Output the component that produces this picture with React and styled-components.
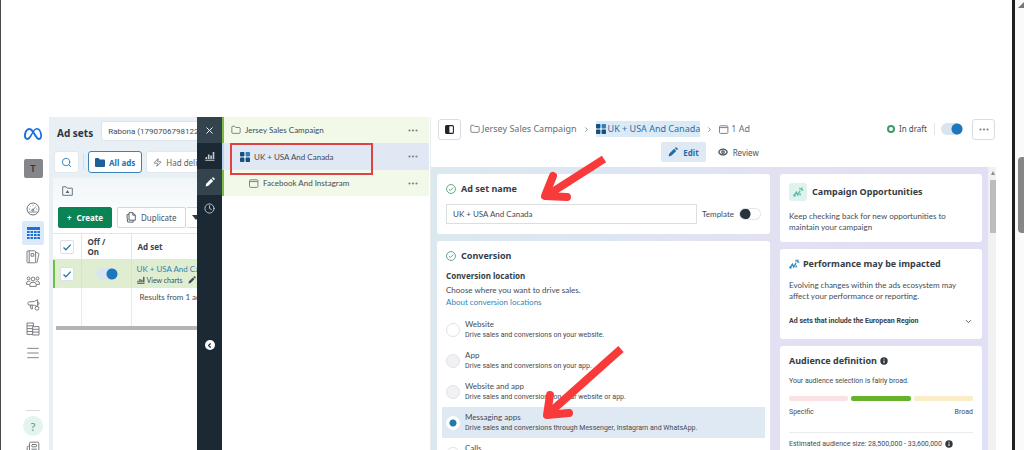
import React from "react";
import styled, { createGlobalStyle, css } from "styled-components";
import {
    Search, Zap, Menu, X, Clock, Folder, ChevronRight,
    ChevronDown, ChevronLeft, Eye, Newspaper
} from "lucide-react";
import { FaMeta } from "react-icons/fa6";

const GlobalStyle = createGlobalStyle`
    * {
        box-sizing: border-box;
    }
    body {
        margin: 0;
        background: #fff;
        color: #434c55;
        font-family: Lato, "Open Sans", sans-serif;
        font-size: 8px;
        line-height: 12px;
    }
    button, input, select {
        font-family: inherit;
        color: inherit;
        margin: 0;
    }
    h1, h2, h3, p {
        margin: 0;
    }
    h1, h2, h3, th {
        font-family: "Noto Sans", "Open Sans", sans-serif;
    }
    a {
        text-decoration: none;
    }
    svg {
        flex: none;
        display: block;
    }
`;

const Page = styled.div`
    display: flex;
    height: 100vh;
    overflow: hidden;
`, Document = styled.div`
    flex: 1;
    min-width: 0;
    display: flex;
    padding: 117px 16px 0;
    border-left: 1px solid #4a4a4a;
    border-right: 3px solid #1f1f1f;
`, PageScroll = styled.div`
    flex: none;
    width: 9px;
    display: flex;
    flex-direction: column;
    background: #fafafa;
    overflow: hidden;
`, PageScrollArrow = styled.div`
    width: 12px;
    height: 6px;
    margin: 2px 0 149px 3px;
    background: #777;
    clip-path: polygon(50% 0, 100% 100%, 0 100%);
`, PageScrollThumb = styled.div`
    width: 12px;
    height: 76px;
    margin-left: 3px;
    border-radius: 4px;
    background: #868686;
`;

/* left navigation */
const Nav = styled.nav`
    flex: none;
    width: 32px;
    display: flex;
    flex-direction: column;
    align-items: center;
    color: #6d7277;
    > * {
        flex: none;
    }
`, NavLogo = styled.div`
    padding: 8px 0;
    color: #1f6fe0;
`, Avatar = styled.button`
    width: 19px;
    height: 19px;
    margin: 8px 0 19px;
    padding: 0;
    border: 0;
    border-radius: 2px;
    background: #85868b;
    color: #33363a;
    font-size: 9px;
    font-weight: 700;
`, NavItem = styled.button`
    display: flex;
    align-items: center;
    justify-content: center;
    width: 22px;
    height: 24px;
    padding: 0;
    border: 0;
    border-radius: 2px;
    background: ${p => p.$active ? '#dce9f8' : 'none'};
    color: ${p => p.$active ? '#1f6fd6' : 'inherit'};
`, NavRule = styled.hr`
    width: 14px;
    margin: 45px 0 5px;
    border: 0;
    border-top: 1px solid #d8dadc;
`, Help = styled.button`
    width: 20px;
    height: 20px;
    padding: 0;
    border: 0;
    border-radius: 50%;
    background: #e3f3ee;
    color: #5a9c8c;
    font-size: 12px;
`;

/* ad sets list */
const AdsPane = styled.section`
    flex: none;
    width: 148px;
    overflow: hidden;
    background: #e8f0f6;
`, AdsHeader = styled.div`
    display: flex;
    align-items: center;
    gap: 8px;
    width: 260px;
    padding: 4px 0 10px 8px;
`, AdsTitle = styled.h1`
    padding-top: 4px;
    font-size: 10px;
    line-height: 16px;
    color: #2b3440;
`, AccountSelect = styled.select`
    width: 150px;
    height: 20px;
    padding: 0 6px;
    border: 1px solid #dde3e8;
    border-radius: 3px;
    background: #fff;
    appearance: none;
    font-family: Roboto, sans-serif;
    font-size: 8px;
`, Filters = styled.div`
    display: flex;
    align-items: center;
    gap: 4px;
    width: 260px;
    padding: 0 0 5px 5px;
`, FilterButton = styled.button`
    display: flex;
    align-items: center;
    gap: 4px;
    height: 22px;
    padding: 0 6px;
    border: 1px solid ${p => p.$active ? '#3d82b5' : '#e3e8ec'};
    border-radius: 3px;
    background: #fff;
    color: ${p => p.$active ? '#2272b0' : '#5b6269'};
    font-family: "Noto Sans", sans-serif;
    font-size: 8px;
    font-weight: ${p => p.$active ? 700 : 400};
    white-space: nowrap;
`, FilterRule = styled.span`
    width: 1px;
    height: 16px;
    background: #d5dde3;
`, AdsBody = styled.div`
    height: 100%;
    margin-left: 4px;
    background: linear-gradient(#f1f6f9, #fff 50px);
`, BodyTools = styled.div`
    padding: 8px 9px 11px;
`, Actions = styled.div`
    display: flex;
    gap: 5px;
    width: 260px;
    padding: 0 0 5px 5px;
`, ActionButton = styled.button`
    display: flex;
    align-items: center;
    gap: 5px;
    height: 21px;
    padding: 0 8px;
    border: 1px solid ${p => p.$primary ? '#0b8455' : '#d3d8dc'};
    border-radius: 2px;
    background: ${p => p.$primary ? '#0b8455' : '#fff'};
    color: ${p => p.$primary ? '#fff' : '#4b5259'};
    font-family: "Noto Sans", sans-serif;
    font-size: 8px;
    font-weight: ${p => p.$primary ? 700 : 400};
`, SplitButton = styled.div`
    display: flex;
    ${ActionButton} + ${ActionButton} {
        padding: 0 6px;
        border-left: 0;
    }
`, Table = styled.table`
    width: 260px;
    table-layout: fixed;
    border-collapse: collapse;
    text-align: left;
`, Th = styled.th`
    width: ${p => p.$width || 'auto'};
    height: 26px;
    padding: 0 6px;
    border: 1px solid #e2e6e9;
    border-left-width: 0;
    color: #3b434b;
    font-size: 8px;
    font-weight: 700;
    line-height: 10px;
`, Td = styled.td`
    height: 28px;
    padding: 0 5px;
    border-right: 1px solid ${p => p.$selected ? '#d5e6c4' : '#e8ebed'};
    background: ${p => p.$selected ? '#dfeed0' : 'none'};
    white-space: nowrap;
    vertical-align: ${p => p.$top ? 'top' : 'middle'};
    &:first-child {
        box-shadow: ${p => p.$selected ? 'inset 2px 0 #6cc03c' : 'none'};
    }
    input[role="switch"] {
        margin: 0 8px 0 auto;
    }
`, AdLink = styled.a`
    display: block;
    color: #3a7fb0;
`, AdTools = styled.div`
    display: flex;
    align-items: center;
    gap: 2px;
    font-size: 7px;
    line-height: 10px;
`, Results = styled.p`
    padding: 3px 3px 23px;
`, TableScroll = styled.div`
    width: 260px;
    height: 4px;
    margin: 0 3px;
    background: #b4b4b4;
`, Checkbox = styled.input`
    display: block;
    width: 14px;
    height: 14px;
    margin: 0 auto;
    border: 1px solid #dbe1e6;
    border-radius: 2px;
    appearance: none;
    background: #fff url("data:image/svg+xml,%3Csvg xmlns='http://www.w3.org/2000/svg' viewBox='0 0 12 12'%3E%3Cpath d='M2.5 6.5l2.4 2.3L9.7 3.6' fill='none' stroke='%232c76ad' stroke-width='1.3'/%3E%3C/svg%3E") center / 12px 12px no-repeat;
`, Toggle = styled.input`
    flex: none;
    display: block;
    width: 22px;
    height: 12px;
    border-radius: 6px;
    appearance: none;
    background: radial-gradient(circle at 6px 6px, #27323c 5px, #fff 6px);
    box-shadow: inset 0 0 0 1px #e3e7ea;
    &:checked {
        background: radial-gradient(circle at 16px 6px, #1b78bd 5px, #d9e4ee 6px);
        box-shadow: none;
    }
`;

/* dark rail */
const Rail = styled.nav`
    flex: none;
    width: 25px;
    display: flex;
    flex-direction: column;
    align-items: center;
    background: #1b2935;
    color: #c2cad0;
`, RailItem = styled.button`
    display: flex;
    align-items: center;
    justify-content: center;
    width: 25px;
    height: 26px;
    padding: 0;
    border: 0;
    background: ${p => p.$active ? '#33444f' : 'none'};
    color: ${p => p.$active ? '#fff' : 'inherit'};
`, RailCollapse = styled.button`
    display: flex;
    align-items: center;
    justify-content: center;
    width: 10px;
    height: 10px;
    margin-top: 119px;
    padding: 0;
    border: 0;
    border-radius: 50%;
    background: #fff;
    color: #1b2935;
`;

/* campaign tree */
const Tree = styled.aside`
    flex: none;
    width: 209px;
    padding-right: 1px;
    border-right: 1px solid #e9edf0;
`, TreeRow = styled.div`
    position: relative;
    display: flex;
    align-items: center;
    gap: 4px;
    height: ${p => p.$selected ? 27 : 26}px;
    padding: 0 11px 0 ${p => 7 + p.$level * 9}px;
    border-left: 2px solid ${p => p.$selected ? '#b9d4ef' : '#7dbb45'};
    background: ${p => p.$selected ? '#e0e8f3' : '#f3f9e9'};
`, TreeLabel = styled.span`
    flex: 1;
`, DotsButton = styled.button`
    display: flex;
    align-items: center;
    justify-content: center;
    padding: 0;
    border: 0;
    background: none;
    ${p => p.$boxed && css`
        width: 23px;
        height: 21px;
        margin-left: 3px;
        border: 1px solid #d9dde2;
        border-radius: 3px;
        background: #fff;
    `}
`, Highlight = styled.div`
    position: absolute;
    top: 0;
    left: 6px;
    width: 143px;
    height: 32px;
    border: 2px solid #dd4247;
    z-index: 1;
`;

/* editor */
const Editor = styled.main`
    position: relative;
    flex: 1;
    min-width: 0;
    display: flex;
    flex-direction: column;
`, EditorHeader = styled.header`
    height: 50px;
    padding-top: 1px;
`, Crumbs = styled.div`
    display: flex;
    align-items: center;
    gap: 6px;
    padding: 0 1px 0 7px;
    height: 22px;
    font-family: "Noto Sans", sans-serif;
    font-size: 9px;
`, PanelButton = styled.button`
    display: flex;
    align-items: center;
    justify-content: center;
    width: 23px;
    height: 21px;
    margin-right: 3px;
    padding: 0;
    border: 1px solid #d9dde2;
    border-radius: 3px;
    background: #fff;
`, Crumb = styled.a`
    display: flex;
    align-items: center;
    gap: 2px;
    height: 16px;
    color: ${p => p.$active ? '#2c6f9f' : '#666e76'};
    background: ${p => p.$active ? '#dbeaf7' : 'none'};
    white-space: nowrap;
`, Status = styled.div`
    display: flex;
    align-items: center;
    gap: 4px;
    margin-left: auto;
    padding-right: 7px;
    border-right: 1px solid #e2e6ea;
    font-size: 8px;
`, StatusDot = styled.span`
    width: 8px;
    height: 8px;
    border: 2px solid #3c9c6c;
    border-radius: 50%;
`, Tabs = styled.div`
    display: flex;
    justify-content: center;
    gap: 5px;
    padding-top: 2px;
`, Tab = styled.button`
    display: flex;
    align-items: center;
    gap: 5px;
    height: 20px;
    padding: 0 7px;
    border: 0;
    border-radius: 2px;
    background: ${p => p.$active ? '#dfe9f4' : 'none'};
    color: ${p => p.$active ? '#1f6ca8' : '#4b545c'};
    font-family: "Noto Sans", sans-serif;
    font-size: 8px;
    font-weight: ${p => p.$active ? 700 : 400};
`, EditorBody = styled.div`
    flex: 1;
    min-height: 0;
    display: flex;
    background: linear-gradient(100deg, #dbe9ef, #dfe4f3 40%, #e4def2 75%, #dfe0f6);
`, Columns = styled.div`
    flex: 1;
    min-width: 0;
    display: grid;
    grid-template-columns: minmax(0, 1fr) 202px;
    gap: 10px;
    padding: 7px 6px 0;
    overflow: hidden;
`, Column = styled.div`
    display: flex;
    flex-direction: column;
    gap: 7px;
`, BodyScroll = styled.div`
    flex: none;
    width: 8px;
    display: flex;
    flex-direction: column;
    align-items: flex-end;
    background: #f1f1f3;
`, BodyScrollArrow = styled.div`
    width: 4px;
    height: 4px;
    margin: 4px 1px 5px;
    background: #8c8c8c;
    clip-path: polygon(50% 0, 100% 100%, 0 100%);
`, BodyScrollThumb = styled.div`
    width: 6px;
    height: 53px;
    background: #bcbcbe;
`, Card = styled.section`
    padding: 9px;
    border-radius: 3px;
    background: #fff;
`, CardTitle = styled.h2`
    display: flex;
    align-items: center;
    gap: ${p => p.$tight ? 3 : 5}px;
    font-size: 9px;
    line-height: 12px;
    color: #343d46;
`, NameRow = styled.div`
    display: flex;
    align-items: center;
    gap: 5px;
    padding: 9px 0 1px;
`, NameInput = styled.input`
    flex: 1;
    min-width: 0;
    height: 20px;
    padding: 0 6px;
    border: 1px solid #dcdfe2;
    font-size: 8px;
`, TemplateLabel = styled.label`
    display: flex;
    align-items: center;
    gap: 5px;
`, Subtitle = styled.h3`
    margin: 8px 0 2px;
    font-size: 8px;
    line-height: 12px;
    color: #343d46;
`, Note = styled.p`
    line-height: 12px;
`, HelpLink = styled.a`
    display: block;
    margin-bottom: 6px;
    color: #2f86b8;
`, Option = styled.label`
    display: flex;
    align-items: center;
    gap: 5px;
    height: 31px;
    margin: 0 -4px;
    padding: 0 4px;
    background: ${p => p.$selected ? '#dfe9f3' : 'none'};
`, Radio = styled.input`
    flex: none;
    width: 14px;
    height: 14px;
    border: 1px solid #e0e2e6;
    border-radius: 50%;
    appearance: none;
    background: #fff;
    &:disabled {
        background: #f1f1f5;
    }
    &:checked {
        border-color: #fff;
        background: radial-gradient(circle, #2277ab 3px, #fff 4px);
    }
`, OptionName = styled.span`
    display: block;
    line-height: 11px;
`, OptionText = styled.span`
    display: block;
    font-family: Roboto, sans-serif;
    font-size: 7px;
    line-height: 11px;
`, IconTile = styled.span`
    display: flex;
    align-items: center;
    justify-content: center;
    width: 18px;
    height: 18px;
    border-radius: 3px;
    background: #dff3ee;
    color: #5cb9a5;
`, SideText = styled.p`
    padding-top: 10px;
    line-height: 11px;
`, Disclosure = styled.button`
    display: flex;
    align-items: center;
    justify-content: space-between;
    width: 100%;
    height: 12px;
    margin: 13px 0 3px;
    padding: 0;
    border: 0;
    background: none;
    color: #343d46;
    font-family: Roboto, sans-serif;
    font-size: 7px;
    font-weight: 700;
`, Meter = styled.div`
    display: grid;
    grid-template-columns: repeat(3, 1fr);
    gap: 3px;
    margin: 9px 0 5px;
`, MeterPart = styled.span`
    height: 5px;
    border-radius: 2px;
    background: ${p => p.$color};
`, MeterLabels = styled.div`
    display: flex;
    justify-content: space-between;
    padding-bottom: 14px;
    border-bottom: 1px solid #e9ebee;
    font-family: Roboto, sans-serif;
    font-size: 7px;
`, Audience = styled.p`
    display: flex;
    align-items: center;
    gap: 3px;
    padding-top: ${p => p.$pad};
    font-family: Roboto, sans-serif;
    font-size: 7px;
    line-height: 12px;
    white-space: nowrap;
`, Arrows = styled.svg`
    position: absolute;
    top: 0;
    left: 0;
    overflow: visible;
    pointer-events: none;
`;

const Dots = () => (
    <svg width="10" height="3" viewBox="0 0 10 3" fill="#7b838a">
        <circle cx="1.5" cy="1.5" r="1.1" />
        <circle cx="5" cy="1.5" r="1.1" />
        <circle cx="8.5" cy="1.5" r="1.1" />
    </svg>
);

const Grid4 = () => (
    <svg width="10" height="10" viewBox="0 0 10 10">
        <rect width="4.4" height="4.4" rx=".8" fill="#174f7c" />
        <rect x="5.6" width="4.4" height="4.4" rx=".8" fill="#2f7fc0" />
        <rect y="5.6" width="4.4" height="4.4" rx=".8" fill="#174f7c" />
        <rect x="5.6" y="5.6" width="4.4" height="4.4" rx=".8" fill="#174f7c" />
    </svg>
);

const AdIcon = () => (
    <svg width="10" height="9" viewBox="0 0 10 9" fill="none" stroke="#7d848a">
        <rect x=".5" y=".8" width="8.4" height="7.6" rx="1" />
        <path d="M.5 2.6h8.4" />
    </svg>
);

const Pen = ({ size = 10 }) => (
    <svg width={size} height={size} viewBox="0 0 10 10" fill="currentColor">
        <path d="M.6 9.4l.6-2.7 4.9-4.9 2.1 2.1-4.9 4.9zM6.8 1.1l.7-.7q.5-.4 1 0l1.1 1.1q.4.5 0 1l-.7.7z" />
    </svg>
);

const Bars = ({ size = 10 }) => (
    <svg width={size} height={size} viewBox="0 0 10 10" fill="currentColor">
        <path d="M.5 6h1.6v2H.5zM2.9 3.6h1.6V8H2.9zM5.3 4.6h1.6V8H5.3zM7.7 1h1.6v7H7.7zM.3 8.8h9.2v.9H.3z" />
    </svg>
);

const Gauge = () => (
    <svg width="14" height="14" viewBox="0 0 14 14" fill="none" stroke="currentColor">
        <circle cx="7" cy="7" r="6" />
        <path d="M2.4 10h9.2M7 8l2.8-3.4M3 7h1M10.2 7h1M7 2.8v1M4 4.2l.6.6" strokeWidth=".8" />
        <circle cx="6.8" cy="8.2" r="1" />
    </svg>
);

const TableIcon = () => (
    <svg width="13" height="12" viewBox="0 0 13 12" fill="currentColor">
        <path d="M0 0h13v3H0zM0 4h2.6v2H0zM3.5 4h2.6v2H3.5zM7 4h2.6v2H7zM10.4 4H13v2h-2.6zM0 7h2.6v2H0zM3.5 7h2.6v2H3.5zM7 7h2.6v2H7zM10.4 7H13v2h-2.6zM0 10h2.6v2H0zM3.5 10h2.6v2H3.5zM7 10h2.6v2H7zM10.4 10H13v2h-2.6z" />
    </svg>
);

const Pages = () => (
    <svg width="14" height="14" viewBox="0 0 14 14" fill="none" stroke="currentColor" strokeWidth=".9">
        <rect x="1" y=".8" width="8.6" height="12" rx="1" />
        <path d="M3.2 1v11.6M5 3.6h2.8v2.6H5zM9.8 2.4l2.6.8q.7.3.5 1l-1.8 8q-.2.7-1.5.5" />
    </svg>
);

const People = () => (
    <svg width="14" height="11" viewBox="0 0 14 11" fill="none" stroke="currentColor" strokeWidth=".9">
        <circle cx="7" cy="3" r="1.9" />
        <circle cx="2.5" cy="2.4" r="1.4" />
        <circle cx="11.5" cy="2.4" r="1.4" />
        <path d="M3.8 10.4V8.6q0-2.4 3.2-2.4t3.2 2.4v1.8zM3.6 8.4H.6V7q0-1.8 2-1.9 1 0 1.7.5M10.4 8.4h3V7q0-1.8-2-1.9-1 0-1.7.5" />
    </svg>
);

const Horn = () => (
    <svg width="13" height="12" viewBox="0 0 13 12" fill="none" stroke="currentColor" strokeWidth=".9">
        <path d="M10.6.8v6.8Q7.4 5.8 4 6H2.2Q.8 5.8.8 4.4T2.2 2.8H4Q7.6 3 10.6.8zM3 6l1 3.8h1.6L5 6M10.6 3.2q1.5.1 1.5 1.2t-1.5 1.2" />
        <circle cx="10" cy="9.3" r="1.9" />
    </svg>
);

const Ledgers = () => (
    <svg width="14" height="14" viewBox="0 0 14 14" fill="none" stroke="currentColor" strokeWidth=".9">
        <path d="M6.6 12.4H1V1h6.4v3M1 3.8h6M1 6.6h5.6M1 9.5h5.6M6.6 4.6H13v8.4H6.6zM6.6 7.3H13M6.6 10.1H13" />
    </svg>
);

const CopyIcon = () => (
    <svg width="10" height="11" viewBox="0 0 10 11" fill="none" stroke="currentColor" strokeWidth=".9">
        <path d="M3 .7h4l2.3 2.4v5.1H3zM6.8.8v2.4h2.4M3 2.2L.9 2.8 1.6 10l5.6.2V8.4" />
    </svg>
);

const FolderUp = () => (
    <svg width="11" height="10" viewBox="0 0 11 10" fill="none" stroke="#5d656d" strokeWidth=".9">
        <path d="M.7 9.3V.8h3.4l1.2 1.4h5v7.1z" />
        <path d="M5.5 4l1.9 2.9H3.6z" fill="#5d656d" stroke="none" />
    </svg>
);

const SolidFolder = () => (
    <svg width="10" height="9" viewBox="0 0 10 9" fill="#1d5f99">
        <path d="M0 1q0-1 1-1h2.6l1.2 1.4H9q1 0 1 1V8q0 1-1 1H1Q0 9 0 8z" />
    </svg>
);

const Check = () => (
    <svg width="10" height="10" viewBox="0 0 9 9" fill="none" stroke="#4d9f78" strokeWidth=".8">
        <circle cx="4.5" cy="4.5" r="4" />
        <path d="M2.6 4.6l1.4 1.3 2.5-2.7" />
    </svg>
);

const Spark = ({ color = 'currentColor' }) => (
    <svg width="11" height="10" viewBox="0 0 11 10" fill="none" stroke={color} strokeWidth="1.3" strokeLinecap="round">
        <path d="M1.2 8.4L3.4 5l1.3 3 2.2-3.8" />
        <path d="M7 1.2v1M8.8 3h1M7.2 7l-.2 1M9 1l-.6 1" />
        <circle cx="1.5" cy="8.4" r=".6" fill={color} />
    </svg>
);

const InfoDot = () => (
    <svg width="8" height="8" viewBox="0 0 8 8">
        <circle cx="4" cy="4" r="3.7" fill="#30373e" />
        <path d="M4 3.5v2.6M4 1.7v1" stroke="#fff" strokeWidth="1" />
    </svg>
);

const PanelIcon = () => (
    <svg width="9" height="9" viewBox="0 0 9 9">
        <rect x=".6" y=".6" width="7.8" height="7.8" rx="1" fill="#fff" stroke="#1d242b" strokeWidth="1.1" />
        <path d="M1 1h3.4v7H1z" fill="#1d242b" />
    </svg>
);

const options = [
    { name: 'Website', text: 'Drive sales and conversions on your website.' },
    { name: 'App', text: 'Drive sales and conversions on your app.', disabled: true },
    { name: 'Website and app', text: 'Drive sales and conversions on your website or app.', disabled: true },
    { name: 'Messaging apps', text: 'Drive sales and conversions through Messenger, Instagram and WhatsApp.', selected: true },
    { name: 'Calls', text: 'Drive sales and conversions through phone calls.' }
];

const Navigation = () => (
    <Nav>
        <NavLogo><FaMeta size={18} /></NavLogo>
        <Avatar>T</Avatar>
        <NavItem aria-label="Overview"><Gauge /></NavItem>
        <NavItem aria-label="Campaigns" $active><TableIcon /></NavItem>
        <NavItem aria-label="Reports"><Pages /></NavItem>
        <NavItem aria-label="Audiences"><People /></NavItem>
        <NavItem aria-label="Advertising"><Horn /></NavItem>
        <NavItem aria-label="Billing"><Ledgers /></NavItem>
        <NavItem aria-label="All tools"><Menu size={16} strokeWidth={1.3} /></NavItem>
        <NavRule />
        <Help>?</Help>
        <NavItem aria-label="News"><Newspaper size={14} strokeWidth={1.6} /></NavItem>
    </Nav>
);

const AdSets = () => (
    <AdsPane>
        <AdsHeader>
            <AdsTitle>Ad sets</AdsTitle>
            <AccountSelect aria-label="Account">
                <option>Rabona (179070679812234)</option>
            </AccountSelect>
        </AdsHeader>
        <Filters>
            <FilterButton aria-label="Search"><Search size={11} color="#2d7db8" /></FilterButton>
            <FilterRule />
            <FilterButton $active><SolidFolder />All ads</FilterButton>
            <FilterButton><Zap size={9} />Had delivery</FilterButton>
        </Filters>
        <AdsBody>
            <BodyTools><FolderUp /></BodyTools>
            <Actions>
                <ActionButton $primary><span>+</span>Create</ActionButton>
                <SplitButton>
                    <ActionButton><CopyIcon />Duplicate</ActionButton>
                    <ActionButton aria-label="More duplicate options">
                        <svg width="8" height="5" viewBox="0 0 8 5" fill="#30373e"><path d="M0 0h8L4 5z" /></svg>
                    </ActionButton>
                </SplitButton>
            </Actions>
            <Table>
                <thead>
                    <tr>
                        <Th $width="28px"><Checkbox type="checkbox" defaultChecked aria-label="Select all" /></Th>
                        <Th $width="50px">Off /<br />On</Th>
                        <Th>Ad set</Th>
                    </tr>
                </thead>
                <tbody>
                    <tr>
                        <Td $selected><Checkbox type="checkbox" defaultChecked aria-label="Select ad set" /></Td>
                        <Td $selected><Toggle type="checkbox" role="switch" defaultChecked aria-label="Ad set on" /></Td>
                        <Td $selected>
                            <AdLink href="#adset">UK + USA And Canada</AdLink>
                            <AdTools><Bars size={8} />View charts &nbsp;<Pen size={8} />Edit</AdTools>
                        </Td>
                    </tr>
                    <tr>
                        <Td />
                        <Td />
                        <Td $top><Results>Results from 1 ad set</Results></Td>
                    </tr>
                </tbody>
            </Table>
            <TableScroll />
        </AdsBody>
    </AdsPane>
);

const CampaignTree = () => (
    <Tree>
        <TreeRow $level={0}>
            <Folder size={10} color="#6a7178" />
            <TreeLabel>Jersey Sales Campaign</TreeLabel>
            <DotsButton aria-label="Campaign menu"><Dots /></DotsButton>
        </TreeRow>
        <TreeRow $level={1} $selected>
            <Grid4 />
            <TreeLabel>UK + USA And Canada</TreeLabel>
            <DotsButton aria-label="Ad set menu"><Dots /></DotsButton>
            <Highlight />
        </TreeRow>
        <TreeRow $level={2}>
            <AdIcon />
            <TreeLabel>Facebook And Instagram</TreeLabel>
            <DotsButton aria-label="Ad menu"><Dots /></DotsButton>
        </TreeRow>
    </Tree>
);

const AdSetEditor = () => (
    <Editor>
        <EditorHeader>
            <Crumbs>
                <PanelButton aria-label="Toggle panel"><PanelIcon /></PanelButton>
                <Crumb href="#campaign"><Folder size={10} />Jersey Sales Campaign</Crumb>
                <ChevronRight size={7} />
                <Crumb href="#adset" $active><Grid4 />UK + USA And Canada</Crumb>
                <ChevronRight size={7} />
                <Crumb href="#ad"><AdIcon />1 Ad</Crumb>
                <Status><StatusDot />In draft</Status>
                <Toggle type="checkbox" role="switch" defaultChecked aria-label="Ad set on" />
                <DotsButton $boxed aria-label="More"><Dots /></DotsButton>
            </Crumbs>
            <Tabs>
                <Tab $active><Pen />Edit</Tab>
                <Tab><Eye size={10} strokeWidth={3} />Review</Tab>
            </Tabs>
        </EditorHeader>
        <EditorBody>
            <Columns>
                <Column>
                    <Card>
                        <CardTitle><Check />Ad set name</CardTitle>
                        <NameRow>
                            <NameInput aria-label="Ad set name" defaultValue="UK + USA And Canada" />
                            <TemplateLabel>Template<Toggle type="checkbox" role="switch" /></TemplateLabel>
                        </NameRow>
                    </Card>
                    <Card>
                        <CardTitle><Check />Conversion</CardTitle>
                        <Subtitle>Conversion location</Subtitle>
                        <Note>Choose where you want to drive sales.</Note>
                        <HelpLink href="#about">About conversion locations</HelpLink>
                        {options.map(o => (
                            <Option key={o.name} $selected={o.selected}>
                                <Radio type="radio" name="location" defaultChecked={o.selected} disabled={o.disabled} />
                                <span>
                                    <OptionName>{o.name}</OptionName>
                                    <OptionText>{o.text}</OptionText>
                                </span>
                            </Option>
                        ))}
                    </Card>
                </Column>
                <Column>
                    <Card>
                        <CardTitle><IconTile><Spark /></IconTile>Campaign Opportunities</CardTitle>
                        <SideText>Keep checking back for new opportunities to<br />maintain your campaign</SideText>
                    </Card>
                    <Card>
                        <CardTitle $tight><Spark color="#2a8fc4" />Performance may be impacted</CardTitle>
                        <SideText>Evolving changes within the ads ecosystem may<br />affect your performance or reporting.</SideText>
                        <Disclosure>Ad sets that include the European Region<ChevronDown size={9} /></Disclosure>
                    </Card>
                    <Card>
                        <CardTitle $tight>Audience definition <InfoDot /></CardTitle>
                        <Audience $pad="8px">Your audience selection is fairly broad.</Audience>
                        <Meter>
                            <MeterPart $color="#f9e1e4" />
                            <MeterPart $color="#65b32a" />
                            <MeterPart $color="#faecc4" />
                        </Meter>
                        <MeterLabels><span>Specific</span><span>Broad</span></MeterLabels>
                        <Audience $pad="5px">Estimated audience size: 28,500,000 - 33,600,000 <InfoDot /></Audience>
                    </Card>
                </Column>
            </Columns>
            <BodyScroll>
                <BodyScrollArrow />
                <BodyScrollThumb />
            </BodyScroll>
        </EditorBody>
        <Arrows width="200" height="310" viewBox="0 0 200 310" fill="none" stroke="#f93a3a" strokeWidth="8" strokeLinejoin="round">
            <path d="M173 42L115 79" />
            <path d="M122 59L114 79L136 80" strokeLinecap="round" />
            <path d="M190 232L116 298" />
            <path d="M119 278L116 298L138 296" strokeLinecap="round" />
        </Arrows>
    </Editor>
);

export default class App extends React.Component {
    render() {
        return (
            <Page>
                <GlobalStyle />
                <Document>
                    <Navigation />
                    <AdSets />
                    <Rail>
                        <RailItem $active aria-label="Close"><X size={11} /></RailItem>
                        <RailItem aria-label="Charts"><Bars /></RailItem>
                        <RailItem $active aria-label="Edit"><Pen /></RailItem>
                        <RailItem aria-label="History"><Clock size={11} /></RailItem>
                        <RailCollapse aria-label="Collapse"><ChevronLeft size={7} strokeWidth={4} /></RailCollapse>
                    </Rail>
                    <CampaignTree />
                    <AdSetEditor />
                </Document>
                <PageScroll>
                    <PageScrollArrow />
                    <PageScrollThumb />
                </PageScroll>
            </Page>
        );
    }
}
